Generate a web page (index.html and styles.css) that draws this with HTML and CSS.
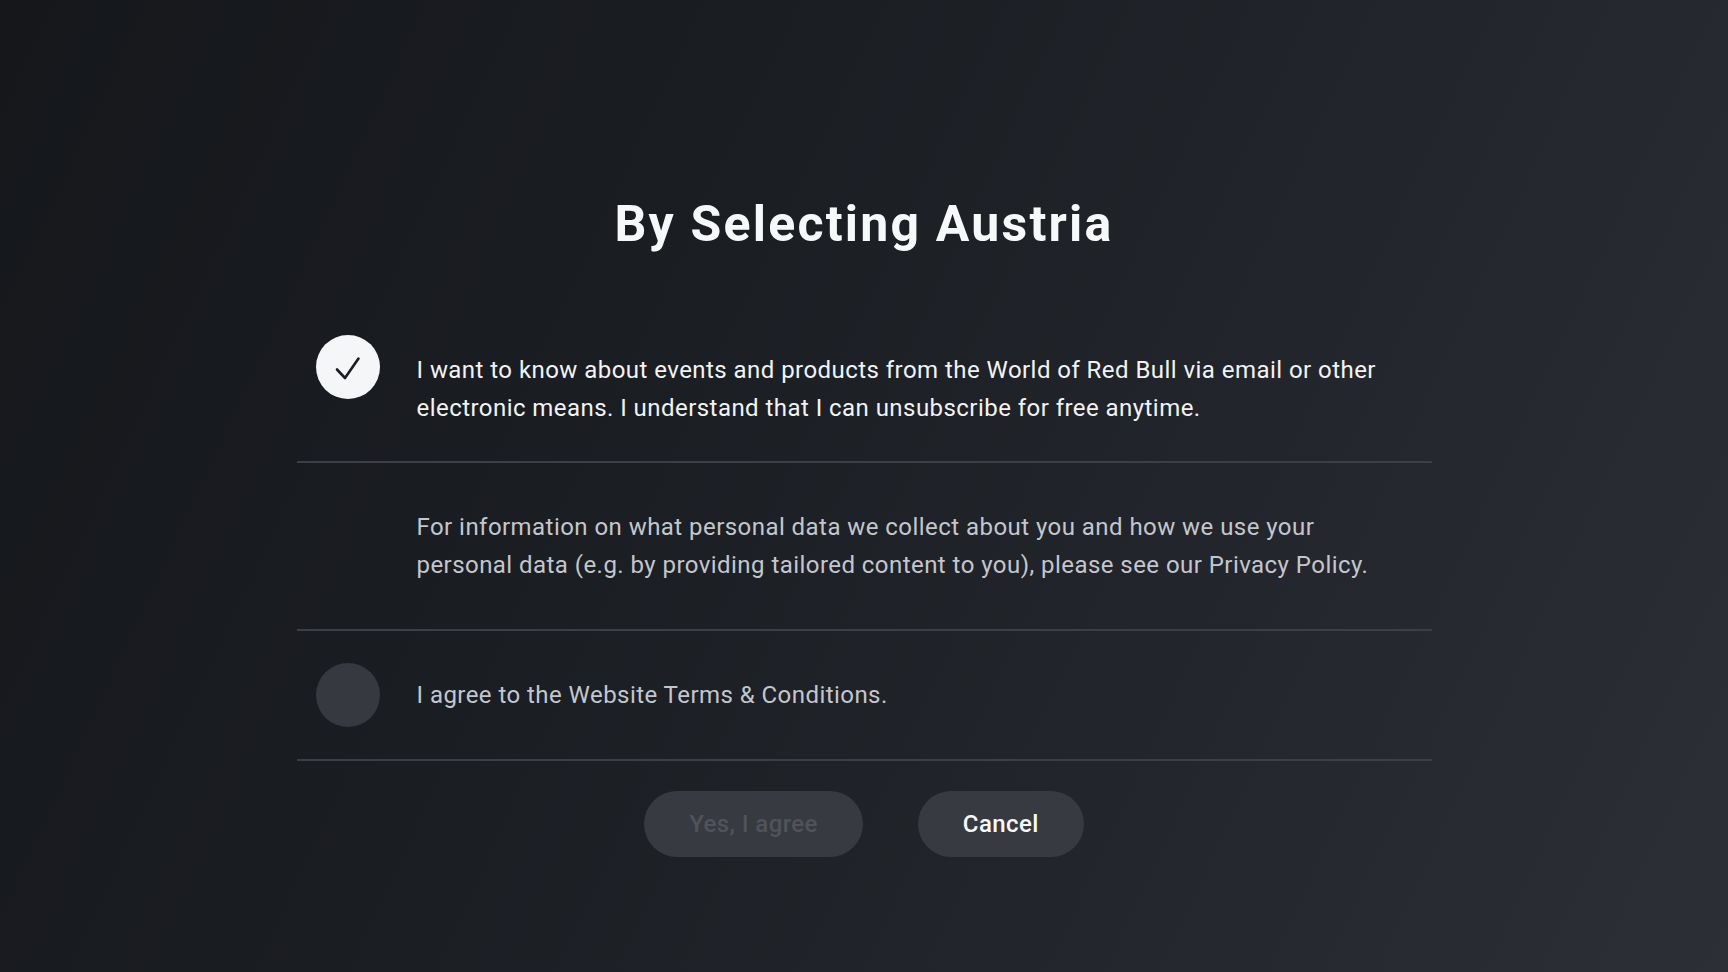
FILE: index.html
```html
<!DOCTYPE html>
<html lang="en">
<head>
<meta charset="utf-8">
<title>By Selecting Austria</title>
<link rel="stylesheet" href="styles.css">
</head>
<body>
<main class="dialog">
  <h1 class="title">By Selecting Austria</h1>
  <ul class="options">
    <li class="option option--first">
      <span class="check check--on" aria-hidden="true">
        <svg viewBox="0 0 64 64" width="64" height="64"><path d="M21 34.5 L29 43 L42.5 23.5" fill="none" stroke="#1b1d22" stroke-width="2.6" stroke-linecap="round" stroke-linejoin="round"/></svg>
      </span>
      <p class="option-text option-text--strong">I want to know about events and products from the World of Red Bull via email or other electronic means. I understand that I can unsubscribe for free anytime.</p>
    </li>
    <li class="option option--info">
      <p class="option-text option-text--muted">For information on what personal data we collect about you and how we use your personal data (e.g. by providing tailored content to you), please see our Privacy Policy.</p>
    </li>
    <li class="option option--last">
      <span class="check" aria-hidden="true"></span>
      <p class="option-text option-text--muted">I agree to the Website Terms &amp; Conditions.</p>
    </li>
  </ul>
  <div class="actions">
    <button class="btn btn--disabled" disabled>Yes, I agree</button>
    <button class="btn btn--primary">Cancel</button>
  </div>
</main>
</body>
</html>
```
FILE: styles.css
```css
* { box-sizing: border-box; }

html, body {
  margin: 0;
  height: 100%;
}

body {
  overflow: hidden;
  font-family: Roboto, "Liberation Sans", sans-serif;
  color: #f2f3f5;
  background: linear-gradient(115deg, #15171b 0%, #1b1e23 40%, #23262c 70%, #2c2f36 100%);
}

.dialog {
  width: 1135px;
  margin: 0 auto;
  padding-top: 194px;
}

.title {
  margin: 0 0 48px;
  font-size: 50px;
  line-height: 60px;
  font-weight: 700;
  letter-spacing: 2.2px;
  text-align: center;
  color: #f7f8fa;
}

.options {
  list-style: none;
  margin: 0;
  padding: 0;
}

.option {
  display: flex;
  align-items: flex-start;
  gap: 37px;
  padding: 33px 34px 34px 19px;
  border-bottom: 2px solid #3c3f46;
}

.option--info {
  padding: 45px 34px 45px 120px;
}

.option--last {
  padding-top: 32px;
  padding-bottom: 32px;
}

.check {
  flex: 0 0 64px;
  width: 64px;
  height: 64px;
  border-radius: 50%;
  background: #363940;
}

.check svg { display: block; }

.check--on {
  background: #f5f6f7;
}

.option-text {
  margin: 0;
  padding-top: 16px;
  font-size: 24px;
  line-height: 38px;
  font-weight: 400;
  letter-spacing: 0.45px;
}

.option--info .option-text { padding-top: 0; }
.option--last .option-text { padding-top: 13px; }

.option-text--strong { color: #f2f3f5; }
.option-text--muted { color: #c3c7cd; }

.actions {
  display: flex;
  justify-content: center;
  gap: 55px;
  margin-top: 30px;
}

.btn {
  height: 66px;
  padding: 0 45px;
  border: 0;
  border-radius: 33px;
  background: #373a41;
  font-family: inherit;
  font-size: 24px;
  font-weight: 500;
  letter-spacing: 0.4px;
}

.btn--disabled {
  color: #50535a;
}

.btn--primary {
  color: #f7f8fa;
}
```
